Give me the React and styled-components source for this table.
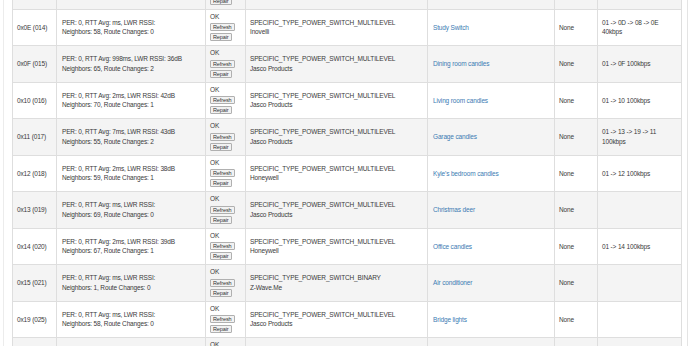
import React from "react";
import styled, { createGlobalStyle } from "styled-components";

const GlobalStyle = createGlobalStyle`
  html, body {
    margin: 0;
    padding: 0;
    background: #fff;
    overflow: hidden;
  }
  body {
    font-family: "Liberation Sans", Arial, sans-serif;
    color: #3a3a3a;
  }
`;

const Card = styled.div`
  box-sizing: border-box;
  height: 346px;
  margin-left: 3px;
  width: 685px;
  border-left: 1px solid #ececec;
  border-right: 1px solid #e4e4e4;
  padding: 0 6px 0 8px;
  overflow: hidden;
`;

const Table = styled.table`
  width: 669px;
  margin-top: -28px;
  border-collapse: collapse;
  table-layout: fixed;
  font-size: 6.5px;
  letter-spacing: -0.15px;
  line-height: 9.5px;
`;

const Row = styled.tr`
  height: 36.5px;
  background: ${(p) => (p.$striped ? "#f4f4f4" : "#fff")};
`;

const Cell = styled.td`
  border: 1px solid #dedede;
  padding: 0 ${(p) => p.$pad || 4}px;
  vertical-align: ${(p) => (p.$top ? "top" : "middle")};
  color: #3a3a3a;
  white-space: nowrap;
  overflow: hidden;
`;

const StatusBox = styled.div`
  display: flex;
  flex-direction: column;
  align-items: flex-start;
  gap: 2px;
  padding-top: 2px;
`;

const SmallButton = styled.button`
  font-family: "Liberation Sans", Arial, sans-serif;
  font-size: 5.5px;
  letter-spacing: -0.1px;
  line-height: 6px;
  height: 8px;
  padding: 0 2px;
  margin: 0;
  border: 1px solid #b0b0b0;
  border-radius: 1px;
  background: #f2f2f2;
  color: #333;
`;

const Link = styled.a`
  color: #3c7bb3;
  text-decoration: none;
`;

const cols = [44, 149, 40, 182, 127, 43, 84];

const row = (id, stats, type, maker, name, route) => ({ id, stats, type, maker, name, route });

const ML = "SPECIFIC_TYPE_POWER_SWITCH_MULTILEVEL";

const rows = [
  null,
  row("0x0E (014)", ["PER: 0, RTT Avg: ms, LWR RSSI:", "Neighbors: 58, Route Changes: 0"], ML, "Inovelli", "Study Switch", ["01 -> 0D -> 08 -> 0E", "40kbps"]),
  row("0x0F (015)", ["PER: 0, RTT Avg: 998ms, LWR RSSI: 36dB", "Neighbors: 65, Route Changes: 2"], ML, "Jasco Products", "Dining room candles", ["01 -> 0F 100kbps"]),
  row("0x10 (016)", ["PER: 0, RTT Avg: 2ms, LWR RSSI: 42dB", "Neighbors: 70, Route Changes: 1"], ML, "Jasco Products", "Living room candles", ["01 -> 10 100kbps"]),
  row("0x11 (017)", ["PER: 0, RTT Avg: 7ms, LWR RSSI: 43dB", "Neighbors: 55, Route Changes: 2"], ML, "Jasco Products", "Garage candles", ["01 -> 13 -> 19 -> 11", "100kbps"]),
  row("0x12 (018)", ["PER: 0, RTT Avg: 2ms, LWR RSSI: 38dB", "Neighbors: 59, Route Changes: 1"], ML, "Honeywell", "Kyle's bedroom candles", ["01 -> 12 100kbps"]),
  row("0x13 (019)", ["PER: 0, RTT Avg: ms, LWR RSSI:", "Neighbors: 69, Route Changes: 0"], ML, "Jasco Products", "Christmas deer", []),
  row("0x14 (020)", ["PER: 0, RTT Avg: 2ms, LWR RSSI: 39dB", "Neighbors: 67, Route Changes: 1"], ML, "Honeywell", "Office candles", ["01 -> 14 100kbps"]),
  row("0x15 (021)", ["PER: 0, RTT Avg: ms, LWR RSSI:", "Neighbors: 1, Route Changes: 0"], "SPECIFIC_TYPE_POWER_SWITCH_BINARY", "Z-Wave.Me", "Air conditioner", []),
  row("0x19 (025)", ["PER: 0, RTT Avg: ms, LWR RSSI:", "Neighbors: 58, Route Changes: 0"], ML, "Jasco Products", "Bridge lights", []),
  null,
];

function Lines({ items }) {
  return items.map((t, i) => <div key={i}>{t}</div>);
}

function Status() {
  return (
    <StatusBox>
      <div>OK</div>
      <SmallButton>Refresh</SmallButton>
      <SmallButton>Repair</SmallButton>
    </StatusBox>
  );
}

export default function App() {
  return (
    <>
      <GlobalStyle />
      <Card>
        <Table>
          <colgroup>
            {cols.map((w, i) => (
              <col key={i} style={{ width: w }} />
            ))}
          </colgroup>
          <tbody>
            {rows.map((r, i) => (
              <Row key={i} $striped={i % 2 === 0}>
                <Cell>{r && r.id}</Cell>
                <Cell $pad={5}>{r && <Lines items={r.stats} />}</Cell>
                <Cell $top>
                  <Status />
                </Cell>
                <Cell>{r && <Lines items={[r.type, r.maker]} />}</Cell>
                <Cell $pad={5}>{r && <Link href="#">{r.name}</Link>}</Cell>
                <Cell>{r && "None"}</Cell>
                <Cell>{r && <Lines items={r.route} />}</Cell>
              </Row>
            ))}
          </tbody>
        </Table>
      </Card>
    </>
  );
}
